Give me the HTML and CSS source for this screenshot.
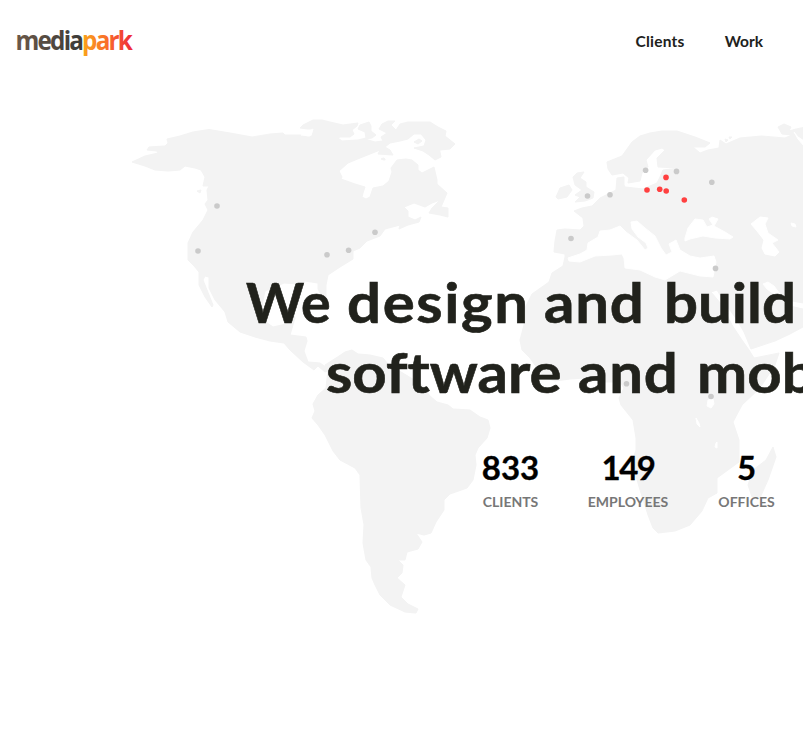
FILE: index.html
```
<!DOCTYPE html>
<html lang="en">
<head>
<meta charset="utf-8">
<title>mediapark</title>
<link rel="stylesheet" href="styles.css">
</head>
<body>
<svg class="map" viewBox="0 0 803 737" aria-hidden="true">
  <g class="land">
    <path d="M132 162 L145 156 158 153 157 151 147 150 149 147 165 146 168 143 167 139 180 136 193 132 209 129.500 230 133 252 137 270 134 283 133 285 135 300 135 308 137 312 136 314 129 308 129 300 128 303 125 313 120 322 120 330 122 343 125 358 123 357 126 352 130 354 134 350 137 340 137 338 138 342 141 358 140 366 138 365 132 358 129 360 125 369 122 371 126 371 131 376 135 372 138 365 139 375 142 383 141 381 137 387 133 379 129 382 124 388 121 395 121 391 125 396 130 400 124 408 122 430 122 438 127 446 131 445 136 455 144 450 149 440 150 439 147 441 157 435 160 429 155 423 151 414 148 424 146 426 140 421 134 414 134 408 139 400 141 390 143 385 147 390 150 393 155 378 154 380 150 360 158 348 163 339 171 342 177 341 179 355 184 365 187 363 193 362 197 366 199 370 197 373 188 383 186 389 181 392 172 391 168 397 160 406 159 412 160 418 165 418 170 422 173 434 167 437 180 437 184 447 193 444 200 441 207 448 208 448 217 440 215 429 213 432 208 440 200 432 203 425 207 414 203 404 207 408 211 408 217 415 220 421 217 419 222 408 225 399 229 400 225 385 229 380 236 367 241 360 248 353 251 353 259 340 267 328 275 326 285 326 297 322 297 318 289 318 283 305 281 299 284 284 283 265 291 262 305 263 320 273 327 286 324 294 315 295 318 290 335 306 337 307 341 304 351 308 362 320 363 330 370 325 372 318 366 314 370 303 362 290 350 284 343 270 341 255 337 240 332 228 322 225 312 215 300 209 288 209 277 205 276 203 280 207 290 213 305 212 307 205 297 199 285 199 272 194 266 188 260 188 243 193 232 203 220 208 210 205 204 208 200 207 190 209 186 203 186 205 177 201 170 195 168 185 166 180 170 168 171 155 170 145 166Z"/>
    <path d="M325 365 L336 358 345 352 352 350 358 354 370 355 383 358 388 364 406 375 421 384 430 396 437 402 448 405 453 409 470 410 480 417 488 420 490 428 487 438 478 448 475 455 476 465 473 480 467 488 450 494 444 500 444 510 436 522 431 533 424 535 416 533 422 542 418 549 407 552 405 560 398 560 403 565 402 573 397 578 405 585 401 597 408 604 418 609 416 613 405 612 390 605 380 595 375 585 372 578 371 567 366 560 363 543 364 525 361 508 360 475 355 468 340 460 333 451 325 435 318 425 312 418 315 411 313 404 318 395 326 388 328 370Z"/>
    <path d="M565 257 L565 254 554 252 555 241 557 230 565 229 580 230 584 226 583 218 574 211 582 208 592 206 600 198 608 194 616 190 617 178 624 177 624 185 625 187 643 189 657 183 660 177 663 170 680 168 658 167 657 158 665 150 662 148 655 150 646 160 648 167 642 173 640 181 628 183 629 178 623 173 612 175 608 169 607 162 622 156 632 142 640 136 650 133 662 131 677 131 695 137 710 143 705 147 693 147 700 153 708 150 719 148 720 140 726 144 740 138 762 136 785 138 792 135 782 134 778 127 784 124 791 127 789 131 796 129 810 126 810 325 803 327 790 334 775 341 751 349 744 332 737 320 725 303 717 290 711 292 722 305 732 325 742 340 749 350 754 358 779 353 775 365 760 388 742 405 733 422 739 440 739 462 717 478 717 493 708 498 702 511 690 525 675 531 658 533 653 528 648 515 640 490 632 462 636 450 636 438 633 420 621 405 619 398 624 388 620 382 605 382 585 378 570 379 555 381 545 378 537 368 530 358 522 350 520 340 524 325 525 308 532 294 549 282 552 273 563 266Z"/>
    <path d="M573 177 L577 173 584 172 580 178 586 182 586 187 594 192 593 198 585 201 575 202 580 197 575 195 582 190 575 185Z M556 197 L560 188 569 185 572 190 567 197 558 199Z M773 447 L776 457 768 480 760 498 752 497 748 485 753 470 766 460Z M197 191l4-1-1 3z M381 159q3-2 4 0t-4 0Z M726 142l-1-3 3 1z"/>
    <path d="M414 142 l5-3 3 2-4 3z M729 137l3 0-2 2z"/>
  </g>
  <g class="water">
    <path d="M568 258 L580 254 587 250 588 243 598 237 600 231 610 230 620 226 626 232 637 240 645 250 648 248 646 243 638 237 632 229 631 222 637 221 645 228 655 236 661 248 666 255 672 252 669 244 676 240 680 250 690 256 700 258 714 256 716 262 713 277 700 276 680 271 665 280 655 277 640 270 625 268 624 258 622 254 612 255 595 256 580 262 569 261Z"/>
    <path d="M685 238 L688 228 695 219 703 220 707 227 713 225 709 219 712 217 718 219 714 226 725 232 733 237 730 239 715 238 703 236 690 239 685 241Z"/>
    <path d="M751 224 L760 217 768 218 765 224 768 233 778 240 772 243 779 252 775 256 765 254 762 248 764 240 757 231Z"/>
    <path d="M763 284 L768 282 774 286 780 294 792 302 803 304 803 308 790 305 777 296 767 289Z M791 223l4 1 1 3-4-1z M794 132l4 7 6 7v-5l-6-4z M708 400l5-1 1 5-3 4-4-2z M696 418l3 5 1 4-3-3z M716 443l1-1 0 6-2-1z M301 135l12-6-3 7z"/>
  </g>
  <g class="city">
    <circle cx="217" cy="206" r="2.800"/><circle cx="198" cy="251" r="2.800"/><circle cx="327" cy="254.700" r="2.800"/><circle cx="348.600" cy="250.300" r="2.800"/><circle cx="375" cy="232.300" r="2.800"/><circle cx="571" cy="238.500" r="2.800"/><circle cx="587.500" cy="196" r="2.800"/><circle cx="610" cy="194.700" r="2.800"/><circle cx="645.600" cy="170.300" r="2.800"/><circle cx="676.500" cy="171.400" r="2.800"/><circle cx="711.800" cy="182.200" r="2.800"/><circle cx="715.500" cy="268.400" r="2.800"/><circle cx="626.500" cy="383.700" r="2.800"/><circle cx="711" cy="396.500" r="2.800"/>
  </g>
  <g class="office">
    <circle cx="666" cy="177.400" r="2.800"/><circle cx="647" cy="190" r="2.800"/><circle cx="659.700" cy="189.200" r="2.800"/><circle cx="666.200" cy="191" r="2.800"/><circle cx="684.300" cy="200" r="2.800"/>
  </g>
</svg>
<header class="header">
  <svg class="logo" width="120" height="36" viewBox="0 0 120 36" role="img" aria-label="mediapark">
    <defs>
      <linearGradient id="brand" gradientUnits="userSpaceOnUse" x1="0" y1="0" x2="115" y2="0">
        <stop offset="0" stop-color="#6b5848"/><stop offset=".575" stop-color="#3b3a38"/>
        <stop offset=".575" stop-color="#faa21b"/><stop offset=".78" stop-color="#f96e2a"/><stop offset="1" stop-color="#ee2a3b"/>
      </linearGradient>
    </defs>
    <text class="logo-text" x="-1.500" y="25.500" textLength="115.500" lengthAdjust="spacingAndGlyphs" fill="url(#brand)">mediapark</text>
  </svg>
  <nav class="nav"><a>Clients</a><a>Work</a></nav>
</header>
<main class="hero">
  <h1 class="title">
    <span class="line first"><span class="we">We</span> <span class="design">design</span> <span class="and">and</span> <span class="build">build</span></span>
    <span class="line second"><span class="software">software</span> <span class="and">and</span> <span class="mob">mob</span></span>
  </h1>
  <div class="stats">
    <div class="stat clients"><strong>833</strong><span>CLIENTS</span></div>
    <div class="stat employees"><strong>149</strong><span>EMPLOYEES</span></div>
    <div class="stat offices"><strong>5</strong><span>OFFICES</span></div>
  </div>
</main>
</body>
</html>
```
FILE: styles.css
```
* { box-sizing: border-box; }
body {
  margin: 0;
  width: 803px;
  height: 737px;
  overflow: hidden;
  background: #fff;
  color: #21221c;
  font-family: Lato, "Liberation Sans", sans-serif;
}
.map { position: absolute; left: 0; top: 0; width: 803px; height: 737px; z-index: -1; }
.land { fill: #f3f3f3; stroke: #f3f3f3; stroke-width: 1; stroke-linejoin: round; }
.water { fill: #fff; stroke: #fff; stroke-width: 1; stroke-linejoin: round; }
.city { fill: #cacaca; }
.office { fill: #ff4040; }
.header {
  height: 84px;
  padding: 0 40px 0 17px;
  display: flex;
  align-items: center;
  justify-content: space-between;
}
.logo { overflow: visible; }
.logo-text { font: 700 27px "Open Sans", "Noto Sans", sans-serif; letter-spacing: -2px; }
.nav { display: flex; gap: 40px; margin-top: -2px; font-size: 15.5px; font-weight: 700; line-height: 24px; }
.nav a:first-child { letter-spacing: .25px; }
.hero { padding-top: 183px; }
.title { margin: 0; font-size: 55.5px; line-height: 70px; font-weight: 700; font-variant-ligatures: none; -webkit-text-stroke: .6px #21221c; }
.line { display: flex; white-space: nowrap; }
.line span { flex: none; transform: scaleX(1.08); transform-origin: left; }
.first { padding-left: 246px; }
.second { padding-left: 326px; }
.line .we { width: 101px; transform: none; }
.design { width: 197px; letter-spacing: 1.5px; }
.first .and { width: 120px; }
.software { width: 252px; }
.and { letter-spacing: .7px; }
.second .and { width: 119px; }
.stats { display: flex; margin-top: 40px; padding-left: 483px; gap: 50px; }
.stat { display: flex; flex-direction: column; align-items: center; }
.clients { width: 55px; }
.employees { width: 80px; }
.offices { width: 57px; }
.stat strong { color: #000; font-size: 33px; line-height: 40px; font-weight: 700; -webkit-text-stroke: .3px #000; }
.employees strong { letter-spacing: -1.5px; }
.stat span { margin-top: 5px; color: #777; font-size: 14px; line-height: 20px; font-weight: 700; }
```
